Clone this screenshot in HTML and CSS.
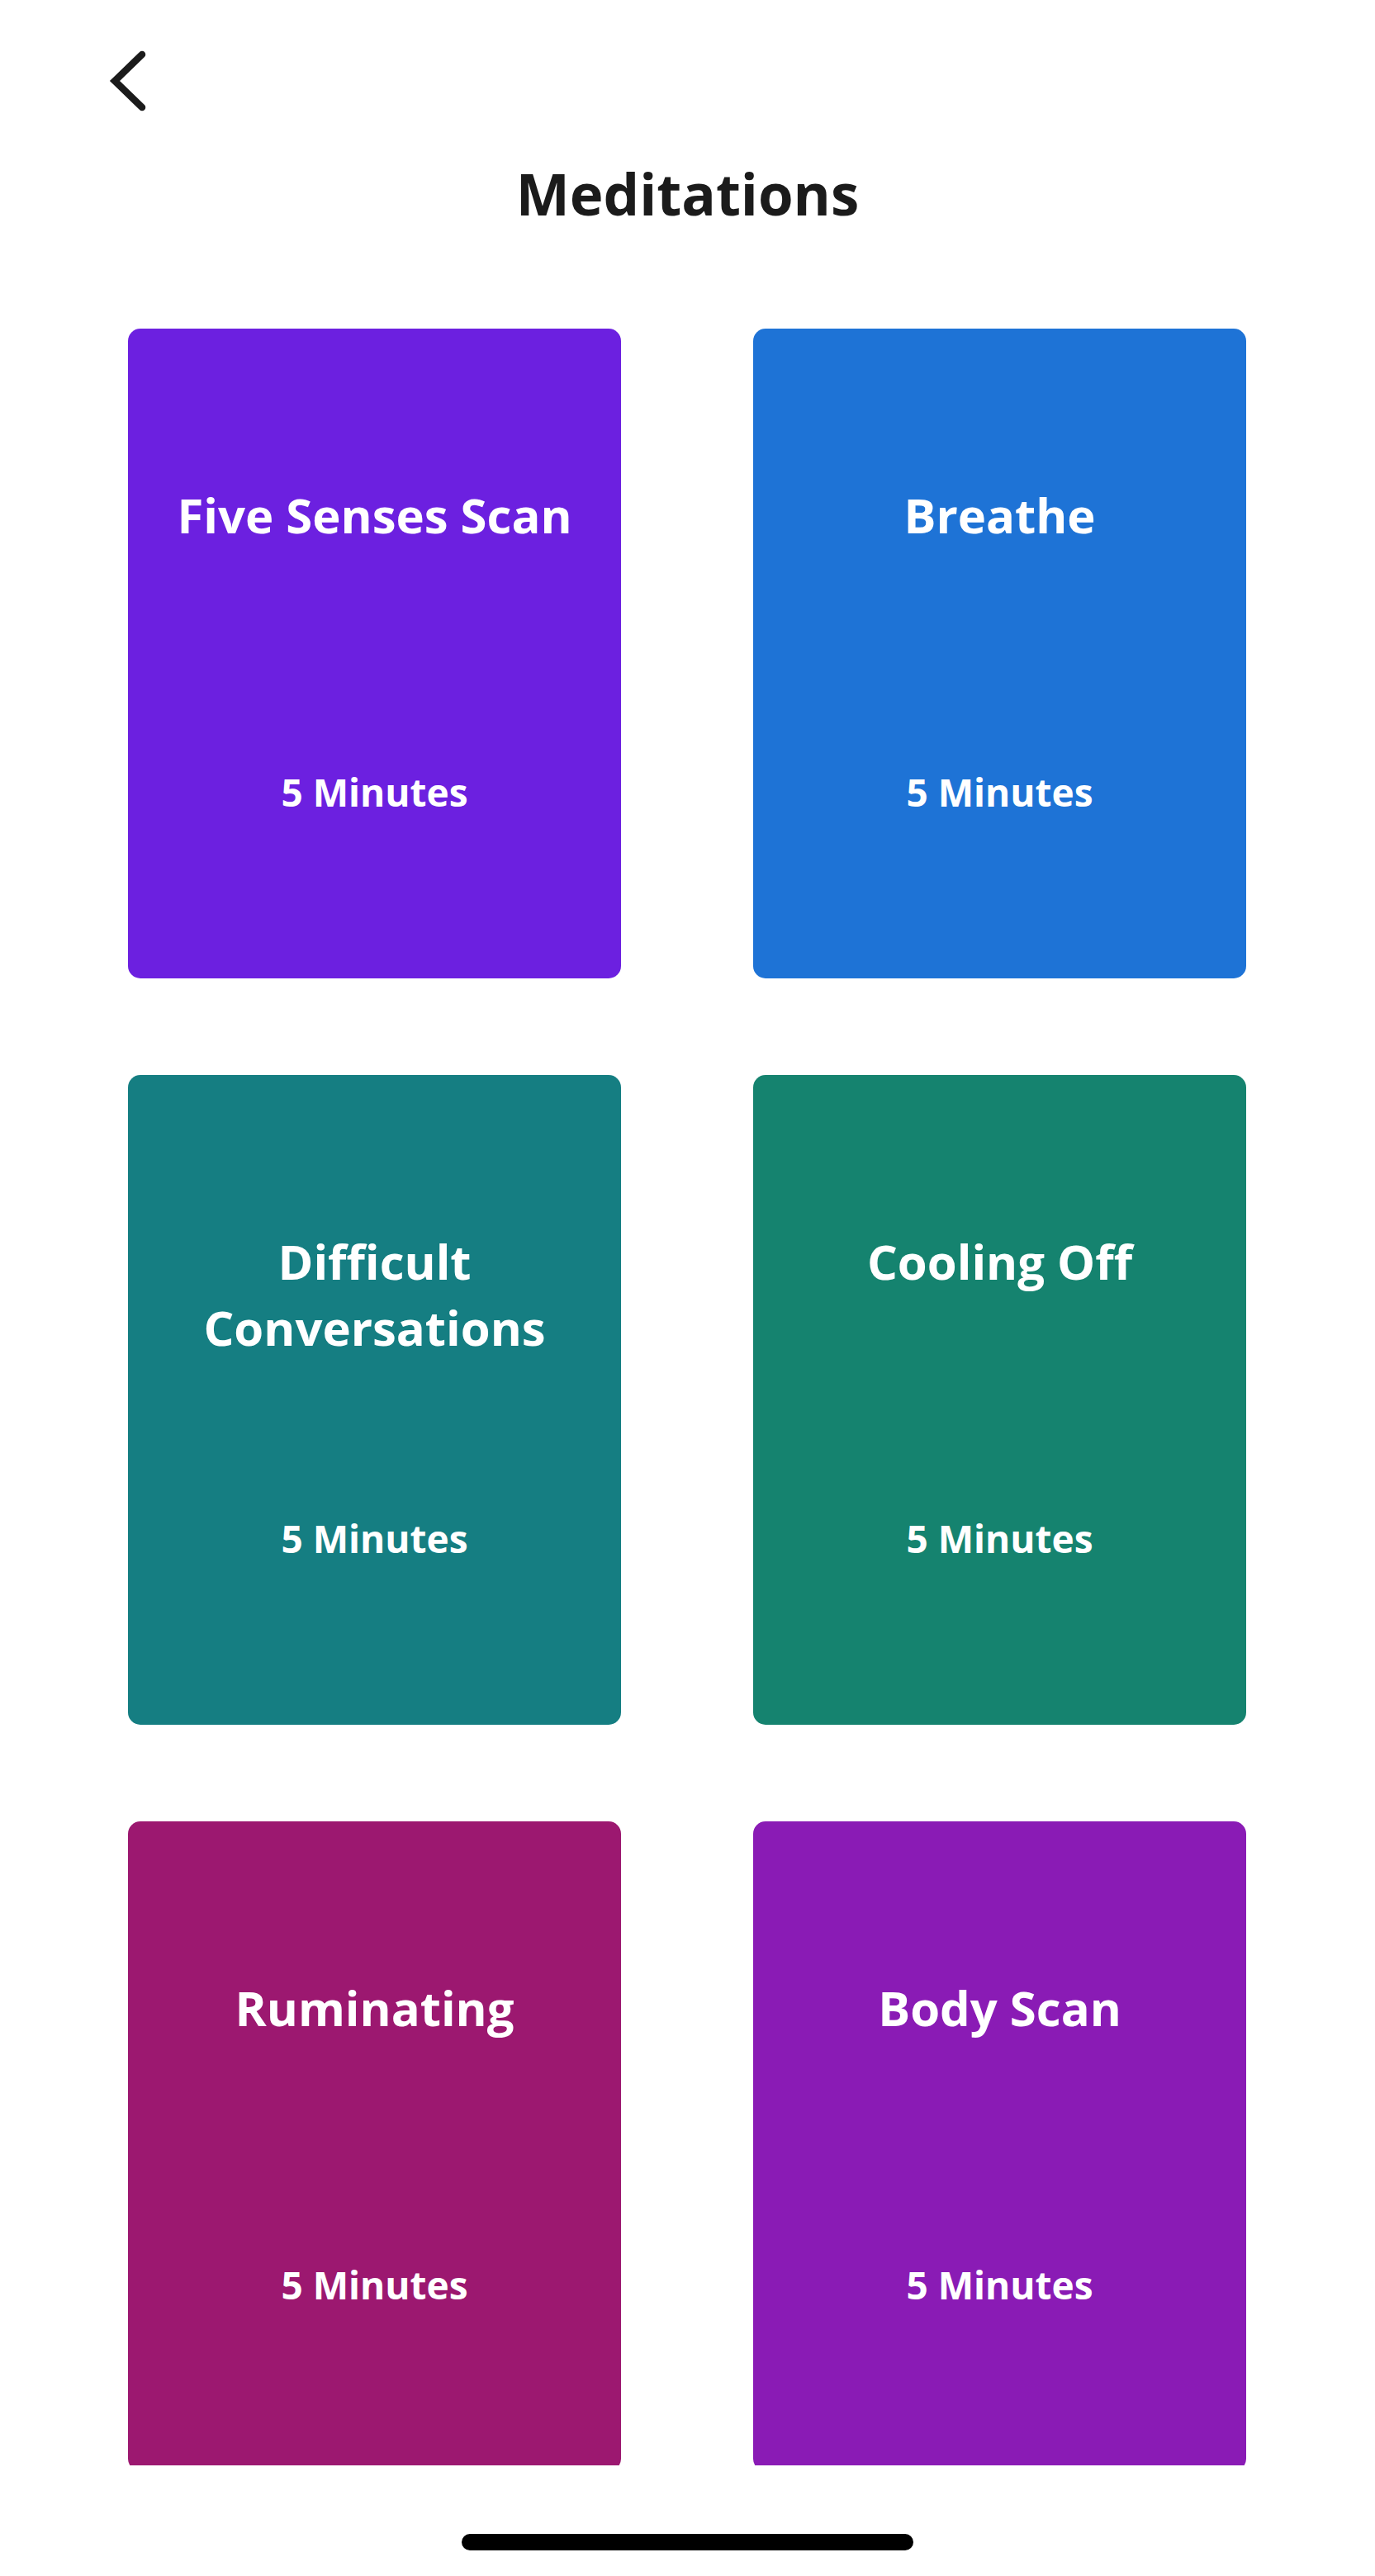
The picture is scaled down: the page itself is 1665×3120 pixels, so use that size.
FILE: index.html
```html
<!DOCTYPE html>
<html lang="en">
<head>
<meta charset="utf-8">
<title>Meditations</title>
<link rel="stylesheet" href="styles.css">
</head>
<body>
<div class="screen">
  <header class="header">
    <button class="back" aria-label="Back">
      <svg width="50" height="84" viewBox="0 0 50 84"><path d="M42 10 L9 42 L42 74" fill="none" stroke="#1b1b1b" stroke-width="8.5" stroke-linecap="round" stroke-linejoin="miter"/></svg>
    </button>
    <h1 class="title">Meditations</h1>
  </header>
  <main class="scroll">
    <div class="grid">
      <div class="card c-purple"><div class="card-title">Five Senses Scan</div><div class="card-time">5 Minutes</div></div>
      <div class="card c-blue"><div class="card-title">Breathe</div><div class="card-time">5 Minutes</div></div>
      <div class="card c-teal"><div class="card-title">Difficult Conversations</div><div class="card-time">5 Minutes</div></div>
      <div class="card c-green"><div class="card-title">Cooling Off</div><div class="card-time">5 Minutes</div></div>
      <div class="card c-magenta"><div class="card-title">Ruminating</div><div class="card-time">5 Minutes</div></div>
      <div class="card c-violet"><div class="card-title">Body Scan</div><div class="card-time">5 Minutes</div></div>
    </div>
  </main>
  <div class="home-bar"></div>
</div>
</body>
</html>
```
FILE: styles.css
```css
html, body {
  margin: 0;
  padding: 0;
  background: #ffffff;
}
body {
  font-family: "Open Sans", "Noto Sans", "Liberation Sans", sans-serif;
}
.screen {
  width: 1665px;
  height: 3120px;
  overflow: hidden;
  display: flex;
  flex-direction: column;
}
.header {
  display: flex;
  flex-direction: column;
}
.back {
  display: block;
  margin: 56px 0 0 130px;
  padding: 0;
  border: 0;
  background: transparent;
  width: 50px;
  height: 84px;
  line-height: 0;
}
.title {
  margin: 45px 0 0;
  text-align: center;
  font-size: 69px;
  line-height: 98px;
  font-weight: 700;
  color: #1b1b1b;
}
.scroll {
  margin-top: 115px;
  height: 2588px;
  overflow: hidden;
}
.grid {
  display: grid;
  grid-template-columns: 597px 597px;
  grid-auto-rows: 787px;
  column-gap: 160px;
  row-gap: 117px;
  padding-left: 155px;
}
.card {
  border-radius: 15px;
  display: flex;
  flex-direction: column;
  align-items: center;
  padding: 186px 40px 196px;
  box-sizing: border-box;
  color: #ffffff;
  text-align: center;
}
.card-title {
  font-size: 58px;
  line-height: 80px;
  font-weight: 700;
}
.card-time {
  margin-top: auto;
  font-size: 46px;
  line-height: 60px;
  font-weight: 700;
}
.c-purple { background: #6c20e0; }
.c-blue { background: #1e73d6; }
.c-teal { background: #157e82; }
.c-green { background: #15836f; }
.c-magenta { background: #9c1870; }
.c-violet { background: #8a1bb5; }
.home-bar {
  align-self: center;
  margin-top: 83px;
  width: 547px;
  height: 20px;
  border-radius: 10px;
  background: #000000;
}
```
